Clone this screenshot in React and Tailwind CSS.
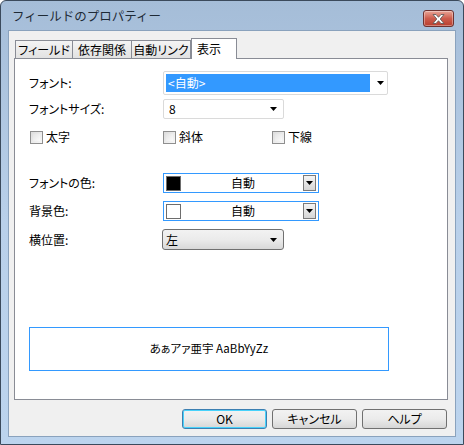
import React from "react";

const font = { fontFamily: '"Noto Sans CJK JP", "Liberation Sans", sans-serif' };

const Arrow = ({ className = "" }) => (
  <svg width="7" height="4" viewBox="0 0 7 4" className={className}>
    <path d="M0 0h7L3.5 4z" fill="#000" />
  </svg>
);

const Check = ({ label }) => (
  <div className="flex items-center gap-[3px]">
    <span className="w-[13px] h-[13px] border border-[#8f8f8f] bg-gradient-to-br from-[#dcdcdc] to-[#f8f8f8] p-[2px]">
      <span className="block w-full h-full bg-gradient-to-br from-[#e4e4e4] to-[#fafafa]" />
    </span>
    <span>{label}</span>
  </div>
);

const ColorCombo = ({ swatch }) => (
  <div className="w-[156px] h-[20px] border border-[#3399ff] bg-white flex items-center px-[2px]">
    <span className={`w-[15px] h-[15px] border border-[#6d6d6d] ${swatch}`} />
    <span className="flex-1 text-center pl-[2px]">自動</span>
    <span className="w-[13px] h-[16px] border border-[#7a7a7a] bg-gradient-to-b from-[#f4f4f4] to-[#d6d6d6] flex items-center justify-center">
      <Arrow />
    </span>
  </div>
);

const Btn = ({ children, primary }) => (
  <button
    className={`w-[85px] h-[20px] rounded-[3px] border bg-gradient-to-b from-[#f2f2f2] via-[#ebebeb] to-[#d6d6d6] flex items-center justify-center leading-none ${
      primary ? "border-[#3c7fb1] shadow-[inset_0_0_0_1px_#48d2fb]" : "border-[#707070]"
    }`}
  >
    {children}
  </button>
);

const Tab = ({ children, first }) => (
  <div
    className={`h-[18px] border border-[#898c95] border-b-0 bg-gradient-to-b from-[#f4f4f4] to-[#e2e2e2] flex items-center justify-center whitespace-nowrap ${
      first ? "w-[58px]" : "w-[59px] border-l-0"
    }`}
  >
    {children}
  </div>
);

export default function App() {
  return (
    <div className="w-[464px] h-[445px] text-[12px] text-black" style={font}>
      <div className="w-full h-full border border-[#3b4a5c] rounded-t-[6px] bg-gradient-to-b from-[#a5bdd8] via-[#b9d0ea] to-[#bcd4ee] px-[7px] pb-[7px] flex flex-col">
        <div className="h-[29px] flex items-start justify-between">
          <span className="text-[12.5px] text-[#1e2a36] pl-[4px] pt-[6px]">フィールドのプロパティー</span>
          <div className="mt-[9px] mr-[2px] w-[31px] h-[17px] rounded-[3px] border border-[#6e3230] bg-gradient-to-b from-[#e8a597] via-[#cd5c4d] to-[#b83d2d] flex items-center justify-center shadow-[inset_0_0_0_1px_rgba(255,255,255,0.35)]">
            <svg width="13" height="10" viewBox="0 0 13 10">
              <path d="M1 0.5h3l2.5 2.8L9 0.5h3L8.2 5 12 9.5H9L6.5 6.7 4 9.5H1L4.8 5z" fill="#fff" stroke="#555" strokeWidth="0.8" />
            </svg>
          </div>
        </div>
        <div className="flex-1 bg-[#f0f0f0] border border-[#8aa2bd] flex flex-col pl-[5px] pr-[7px] [font-feature-settings:'palt']">
          <div className="flex items-end h-[27px] pt-[6px] pl-[1px]">
            <Tab first>フィールド</Tab>
            <Tab>依存関係</Tab>
            <Tab>自動リンク</Tab>
            <div className="h-[21px] w-[46px] border border-[#898c95] border-b-0 bg-white flex items-start pl-[5px] pt-[1px] -mb-px relative z-10">表示</div>
          </div>
          <div className="h-[342px] border border-[#898c95] bg-white flex flex-col pl-[14px] pt-[12px]">
            <div className="flex items-center h-[24px]">
              <span className="w-[134px]">フォント:</span>
              <div className="w-[225px] h-[24px] border border-[#dadada] rounded-[2px] flex items-center p-[2px]">
                <span className="w-[204px] h-[18px] bg-[#3399ff] text-white flex items-center pl-[2px]">&lt;自動&gt;</span>
                <Arrow className="ml-[7px]" />
              </div>
            </div>
            <div className="flex items-center h-[20px] mt-[4px]">
              <span className="w-[134px]">フォントサイズ:</span>
              <div className="w-[121px] h-[20px] border border-[#dadada] rounded-[2px] flex items-center justify-between pl-[5px] pr-[6px]">
                <span>8</span>
                <Arrow />
              </div>
            </div>
            <div className="flex items-center h-[16px] mt-[10px] pl-[1px]">
              <div className="w-[133px]"><Check label="太字" /></div>
              <div className="w-[109px]"><Check label="斜体" /></div>
              <Check label="下線" />
            </div>
            <div className="flex items-center mt-[28px]">
              <span className="w-[134px]">フォントの色:</span>
              <ColorCombo swatch="bg-black" />
            </div>
            <div className="flex items-center mt-[8px]">
              <span className="w-[134px]">背景色:</span>
              <ColorCombo swatch="bg-white" />
            </div>
            <div className="flex items-center mt-[8px]">
              <span className="w-[133px]">横位置:</span>
              <div className="w-[122px] h-[21px] border border-[#707070] rounded-[3px] bg-gradient-to-b from-[#f2f2f2] via-[#ebebeb] to-[#d8d8d8] flex items-center justify-between pl-[3px] pr-[6px]">
                <span>左</span>
                <Arrow />
              </div>
            </div>
            <div className="w-[360px] h-[44px] mt-[77px] border border-[#3399ff] flex items-center justify-center text-[11.5px]">
              あぁアァ亜宇 AaBbYyZz
            </div>
          </div>
          <div className="flex justify-end gap-[5px] mt-[9px] pr-[1px]">
            <Btn primary>OK</Btn>
            <Btn>キャンセル</Btn>
            <Btn>ヘルプ</Btn>
          </div>
        </div>
      </div>
    </div>
  );
}
